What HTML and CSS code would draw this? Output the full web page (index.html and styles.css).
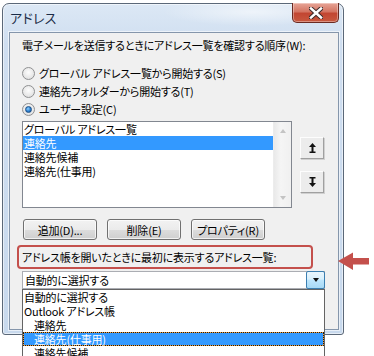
FILE: index.html
```html
<!DOCTYPE html>
<html lang="ja">
<head>
    <meta charset="UTF-8">
    <title>アドレス</title>
    <link rel="stylesheet" href="styles.css">
</head>
<body>
    <div class="window">
        <div class="titlebar">
            <span class="title">アドレス</span>
            <button class="close">
                <svg width="14" height="12" viewBox="0 0 14 12">
                    <path d="M2 1.5L12 10.5M12 1.5L2 10.5" stroke="#3b2a2a" stroke-width="4.5" stroke-linecap="square"/>
                    <path d="M2 1.5L12 10.5M12 1.5L2 10.5" stroke="#fff" stroke-width="2.5" stroke-linecap="square"/>
                </svg>
            </button>
        </div>
        <div class="client">
            <p class="prompt">電子メールを送信するときにアドレス一覧を確認する順序(W):</p>
            <div class="radios">
                <label class="radio-row"><span class="radio"></span>グローバル アドレス一覧から開始する(S)</label>
                <label class="radio-row"><span class="radio"></span>連絡先フォルダーから開始する(T)</label>
                <label class="radio-row"><span class="radio checked"></span>ユーザー設定(C)</label>
            </div>
            <div class="list-row">
                <div class="listbox">
                    <ul class="items">
                        <li>グローバル アドレス一覧</li>
                        <li class="selected">連絡先</li>
                        <li>連絡先候補</li>
                        <li>連絡先(仕事用)</li>
                    </ul>
                    <div class="scrollbar">
                        <span class="tri up"></span>
                        <span class="tri down"></span>
                    </div>
                </div>
                <div class="movers">
                    <button class="mover">
                        <svg width="7" height="10" viewBox="0 0 7 10">
                            <path d="M3.5 0L7 4H4.5V8.5H6.5V10H0.5V8.5H2.5V4H0Z" fill="#111"/>
                        </svg>
                    </button>
                    <button class="mover">
                        <svg width="7" height="10" viewBox="0 0 7 10">
                            <path d="M3.5 10L7 6H4.5V1.5H6.5V0H0.5V1.5H2.5V6H0Z" fill="#111"/>
                        </svg>
                    </button>
                </div>
            </div>
            <div class="actions">
                <button class="push">追加(D)...</button>
                <button class="push">削除(E)</button>
                <button class="push">プロパティ(R)</button>
            </div>
            <div class="callout">アドレス帳を開いたときに最初に表示するアドレス一覧:</div>
            <div class="combo">
                <span class="combo-value">自動的に選択する</span>
                <span class="combo-button"><span class="tri-down"></span></span>
                <ul class="dropdown">
                    <li>自動的に選択する</li>
                    <li>Outlook アドレス帳</li>
                    <li class="sub">連絡先</li>
                    <li class="sub current">連絡先(仕事用)</li>
                    <li class="sub">連絡先候補</li>
                </ul>
            </div>
        </div>
    </div>
    <svg class="pointer" width="32" height="20" viewBox="0 0 32 20">
        <path d="M0 9L15 0.5V6H31V12.5H15V18Z" fill="#c4504c"/>
    </svg>
</body>
</html>
```

FILE: styles.css
```css
body {
    margin: 0;
    background: #fff;
    font-family: "Noto Sans CJK JP", "Noto Sans", sans-serif;
    font-size: 11px;
    letter-spacing: -0.2px;
    font-feature-settings: "palt" 1;
    color: #000;
    position: relative;
    overflow: hidden;
    height: 356px;
}

button {
    font: inherit;
    color: inherit;
    letter-spacing: inherit;
    padding: 0;
}

ul {
    list-style: none;
    margin: 0;
    padding: 0;
}

.window {
    margin: 3px 0 0 2px;
    width: 342px;
    height: 332px;
    box-sizing: border-box;
    border: 1px solid #5b6878;
    border-radius: 7px 7px 3px 3px;
    padding: 0 4px 4px 6px;
    display: flex;
    flex-direction: column;
    background:
        radial-gradient(ellipse 90px 14px at 250px 8px, rgba(255, 255, 255, 0.55), rgba(255, 255, 255, 0)),
        linear-gradient(to bottom, #dce8f5 0, #cfdef0 40px, #c8d9ed 100%);
    box-shadow: inset 0 0 0 1px rgba(255, 255, 255, 0.55);
}

.titlebar {
    height: 28px;
    display: flex;
    justify-content: space-between;
    align-items: flex-start;
}

.title {
    padding: 4px 0 0 1px;
    font-size: 13px;
    color: #1b2c47;
    letter-spacing: 0.3px;
}

.close {
    margin-top: -1px;
    width: 47px;
    height: 20px;
    border: 1px solid #6a2a22;
    border-top: none;
    border-radius: 0 0 5px 5px;
    background: linear-gradient(to bottom, #e7a597 0, #d47563 45%, #c24632 55%, #c8583f 100%);
    box-shadow: inset 0 0 0 1px rgba(255, 255, 255, 0.35);
    display: flex;
    align-items: center;
    justify-content: center;
}

.client {
    flex: 1;
    background: #f0f0f0;
    border: 1px solid #8596ab;
    box-shadow: 0 0 0 1px rgba(255, 255, 255, 0.6);
    position: relative;
}

.prompt {
    margin: 4px 0 0 12px;
    line-height: 16px;
    white-space: nowrap;
}

.radios {
    margin: 11px 0 0 12px;
}

.radio-row {
    display: flex;
    align-items: center;
    height: 18px;
    gap: 4px;
    white-space: nowrap;
}

.radio {
    width: 11px;
    height: 11px;
    border: 1px solid #8f9092;
    border-radius: 50%;
    background: radial-gradient(circle at 50% 40%, #fdfdfd 0, #e4e4e4 70%, #d4d4d4 100%);
    display: flex;
    align-items: center;
    justify-content: center;
}

.radio.checked::after {
    content: "";
    width: 5px;
    height: 5px;
    border-radius: 50%;
    background: radial-gradient(circle at 40% 35%, #8fd0ff 0, #2a7fd0 55%, #16508f 100%);
    border: 1px solid #1d4f85;
}

.list-row {
    margin: 3px 0 0 12px;
    display: flex;
    align-items: flex-start;
    gap: 8px;
}

.listbox {
    width: 270px;
    height: 87px;
    box-sizing: border-box;
    border: 1px solid #828790;
    background: #fff;
    display: flex;
}

.items {
    flex: 1;
}

.items li {
    height: 14px;
    line-height: 14px;
    padding-left: 1px;
    white-space: nowrap;
}

.items .selected {
    background: #3399ff;
    color: #fff;
}

.scrollbar {
    width: 17px;
    background: linear-gradient(to right, #e9e9e9, #f5f5f5 40%, #f0f0f0);
    border-left: 1px solid #ececec;
    display: flex;
    flex-direction: column;
    justify-content: space-between;
    align-items: center;
    padding: 7px 0 7px;
}

.tri {
    width: 0;
    height: 0;
    border-left: 3.5px solid transparent;
    border-right: 3.5px solid transparent;
}

.tri.up {
    border-bottom: 4px solid #c4c4c4;
}

.tri.down {
    border-top: 4px solid #c4c4c4;
}

.movers {
    padding-top: 16px;
    display: flex;
    flex-direction: column;
    gap: 12px;
}

.mover {
    width: 24px;
    height: 22px;
    border: 1px solid;
    border-color: #fdfdfd #a0a0a0 #a0a0a0 #fdfdfd;
    background: #ececec;
    box-shadow: 1px 1px 0 #d0d0d0;
    display: flex;
    align-items: center;
    justify-content: center;
}

.actions {
    margin: 11px 0 0 13px;
    display: flex;
    gap: 10px;
}

.push {
    width: 74px;
    height: 21px;
    border: 1px solid #707070;
    border-radius: 3px;
    background: linear-gradient(to bottom, #f2f2f2 0, #ebebeb 50%, #dddddd 51%, #cfcfcf 100%);
    box-shadow: inset 0 0 0 1px rgba(255, 255, 255, 0.7);
    line-height: 18px;
    white-space: nowrap;
}

.callout {
    margin: 5px 0 0 7px;
    width: 296px;
    height: 24px;
    box-sizing: border-box;
    border: 2px solid #c4504c;
    border-radius: 4px;
    padding: 2px 0 0 3px;
    line-height: 17px;
    white-space: nowrap;
}

.combo {
    margin: 2px 0 0 12px;
    width: 303px;
    height: 18px;
    box-sizing: border-box;
    border: 1px solid #abadb3;
    background: #fff;
    display: flex;
    position: relative;
}

.combo-value {
    flex: 1;
    padding-left: 2px;
    line-height: 16px;
}

.combo-button {
    width: 17px;
    margin: -1px -1px -1px 0;
    border: 1px solid #3c7fb1;
    border-radius: 2px;
    background: linear-gradient(to bottom, #eaf6fd 0, #d9f0fc 45%, #bee6fd 50%, #a7d9f5 100%);
    display: flex;
    align-items: center;
    justify-content: center;
}

.tri-down {
    width: 0;
    height: 0;
    border-left: 3.5px solid transparent;
    border-right: 3.5px solid transparent;
    border-top: 4px solid #111;
}

.dropdown {
    position: absolute;
    top: 17px;
    left: -1px;
    width: 303px;
    height: 90px;
    box-sizing: border-box;
    border: 1px solid #646464;
    background: #fff;
}

.dropdown li {
    height: 14px;
    line-height: 14px;
    padding-left: 1px;
    white-space: nowrap;
}

.dropdown .sub {
    padding-left: 11px;
}

.dropdown .current {
    box-sizing: border-box;
    border: 1px dotted #1a1a1a;
    background: linear-gradient(#3399ff, #3399ff) padding-box, linear-gradient(#f2a03c, #f2a03c) border-box;
    color: #fff;
    padding-left: 10px;
    line-height: 12px;
}

.pointer {
    position: absolute;
    left: 338px;
    top: 252px;
}
```
